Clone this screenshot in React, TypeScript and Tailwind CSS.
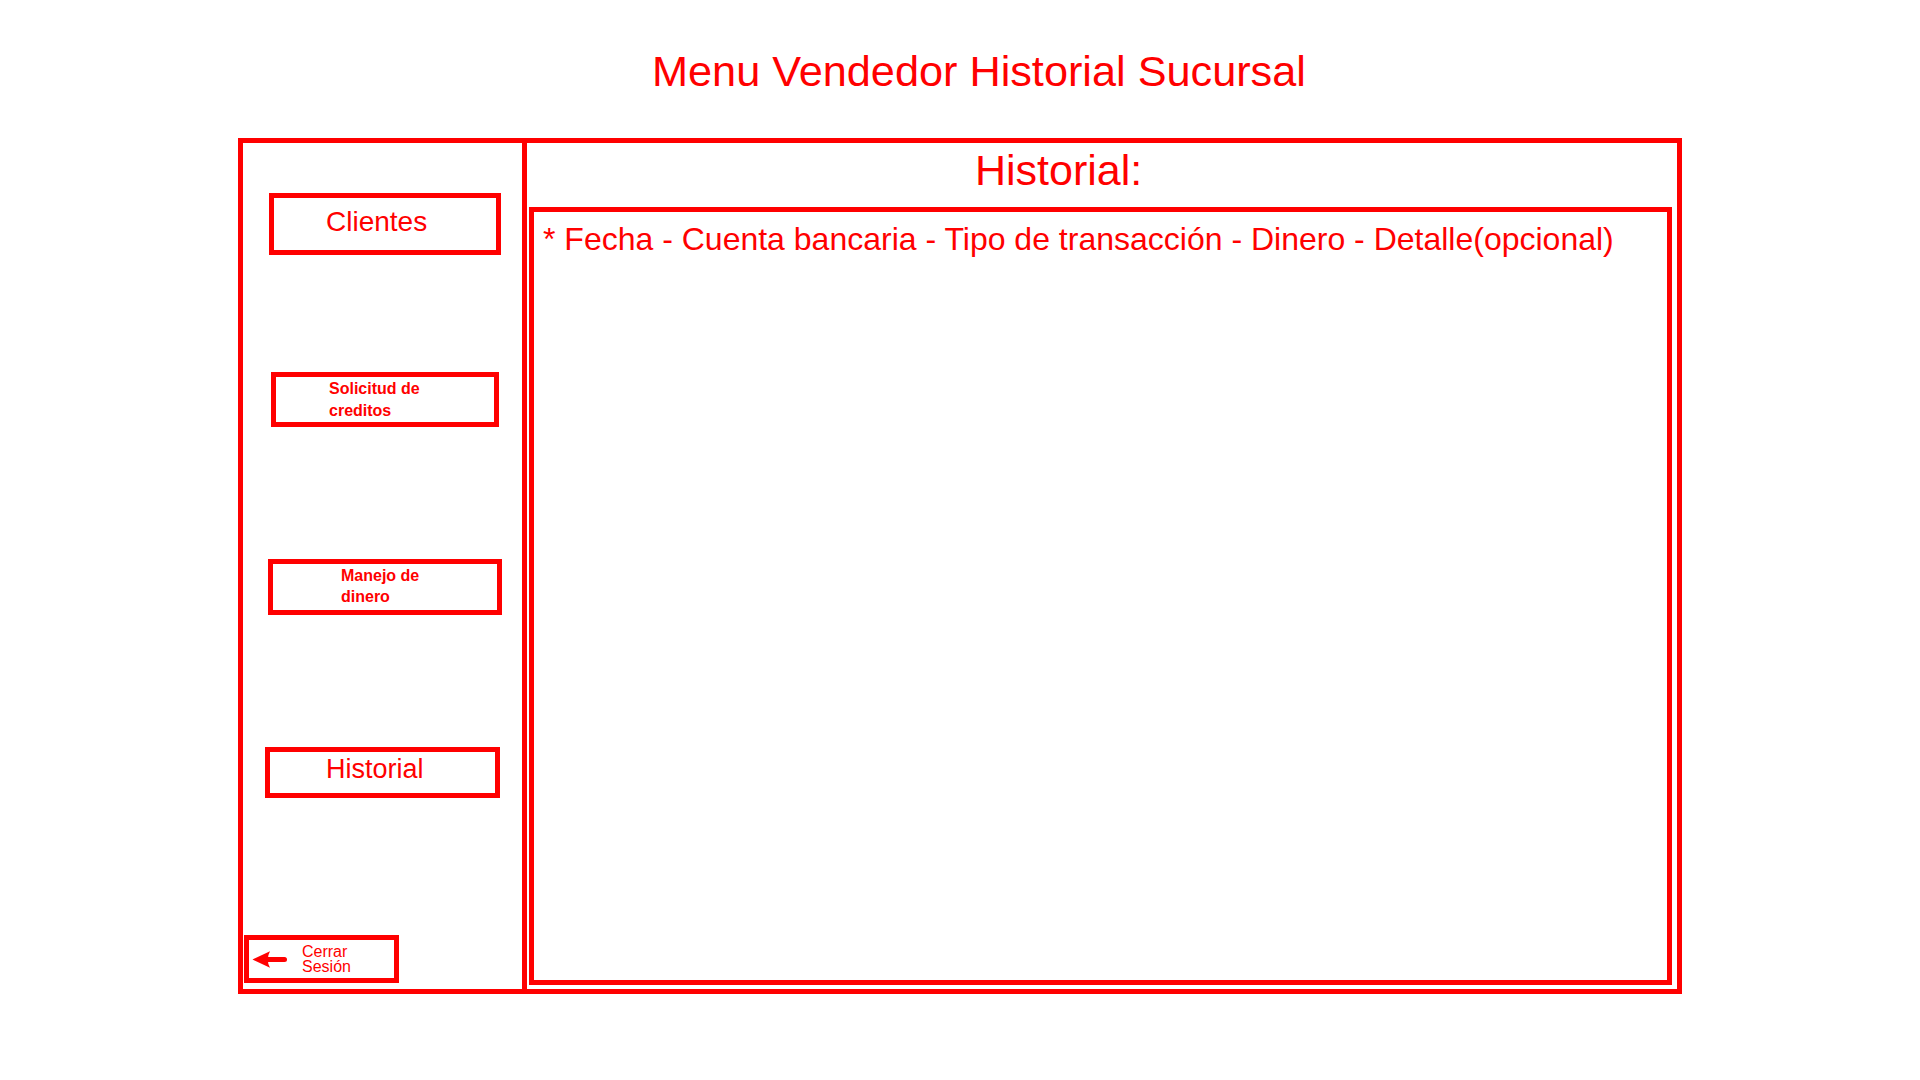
export default function App() {
    return (
        <div className="w-[1920px] h-[1080px] bg-white text-[#ff0000] font-['Liberation_Sans',Arial,sans-serif]">
            {/* Title */}
            <h1 className="pt-[50px] pl-[652px] text-[43.25px] leading-[43px] font-normal whitespace-nowrap">
                Menu Vendedor Historial Sucursal
            </h1>

            {/* Main frame */}
            <div className="ml-[238px] mt-[45px] w-[1444px] h-[856px] border-[5px] border-[#ff0000] flex">
                {/* Sidebar */}
                <aside className="w-[284px] h-full shrink-0 border-r-[5px] border-[#ff0000] flex flex-col">
                    <div className="mt-[50px] ml-[26px] w-[232px] h-[62px] border-[5px] border-[#ff0000] pt-[10px] pl-[52px] text-[28px] leading-[28px] whitespace-nowrap">
                        Clientes
                    </div>
                    <div className="mt-[117px] ml-[28px] w-[228px] h-[55px] border-[5px] border-[#ff0000] pt-[1px] pl-[53px] text-[16px] leading-[22px] font-bold whitespace-nowrap">
                        Solicitud de
                        <br />
                        creditos
                    </div>
                    <div className="mt-[132px] ml-[25px] w-[234px] h-[56px] border-[5px] border-[#ff0000] pt-[1px] pl-[68px] text-[16px] leading-[21px] font-bold whitespace-nowrap">
                        Manejo de
                        <br />
                        dinero
                    </div>
                    <div className="mt-[132px] ml-[22px] w-[235px] h-[51px] border-[5px] border-[#ff0000] pt-[4px] pl-[56px] text-[27px] leading-[27px] whitespace-nowrap">
                        Historial
                    </div>
                    <div className="mt-[137px] ml-[1px] w-[155px] h-[48px] border-[5px] border-[#ff0000] flex items-center pl-[3px]">
                        <svg width="35" height="17" viewBox="0 0 35 17" className="shrink-0">
                            <path d="M0.5 8.5 L18 0.3 Q13.5 8.5 18 16.7 Z" fill="#ff0000" />
                            <line x1="12" y1="8.5" x2="32.5" y2="8.5" stroke="#ff0000" strokeWidth="5" strokeLinecap="round" />
                        </svg>
                        <div className="ml-[15px] text-[16px] leading-[15px] whitespace-nowrap">
                            Cerrar
                            <br />
                            Sesión
                        </div>
                    </div>
                </aside>

                {/* Content */}
                <section className="flex-1 flex flex-col">
                    <h2 className="h-[64px] pt-[6px] pl-[448px] text-[43px] leading-[43px] font-normal whitespace-nowrap">
                        Historial:
                    </h2>
                    <div className="ml-[2px] w-[1143px] h-[778px] border-[5px] border-[#ff0000] pt-[11px] pl-[9px] text-[32px] leading-[32px] whitespace-nowrap">
                        * Fecha - Cuenta bancaria - Tipo de transacción - Dinero - Detalle(opcional)
                    </div>
                </section>
            </div>
        </div>
    );
}
